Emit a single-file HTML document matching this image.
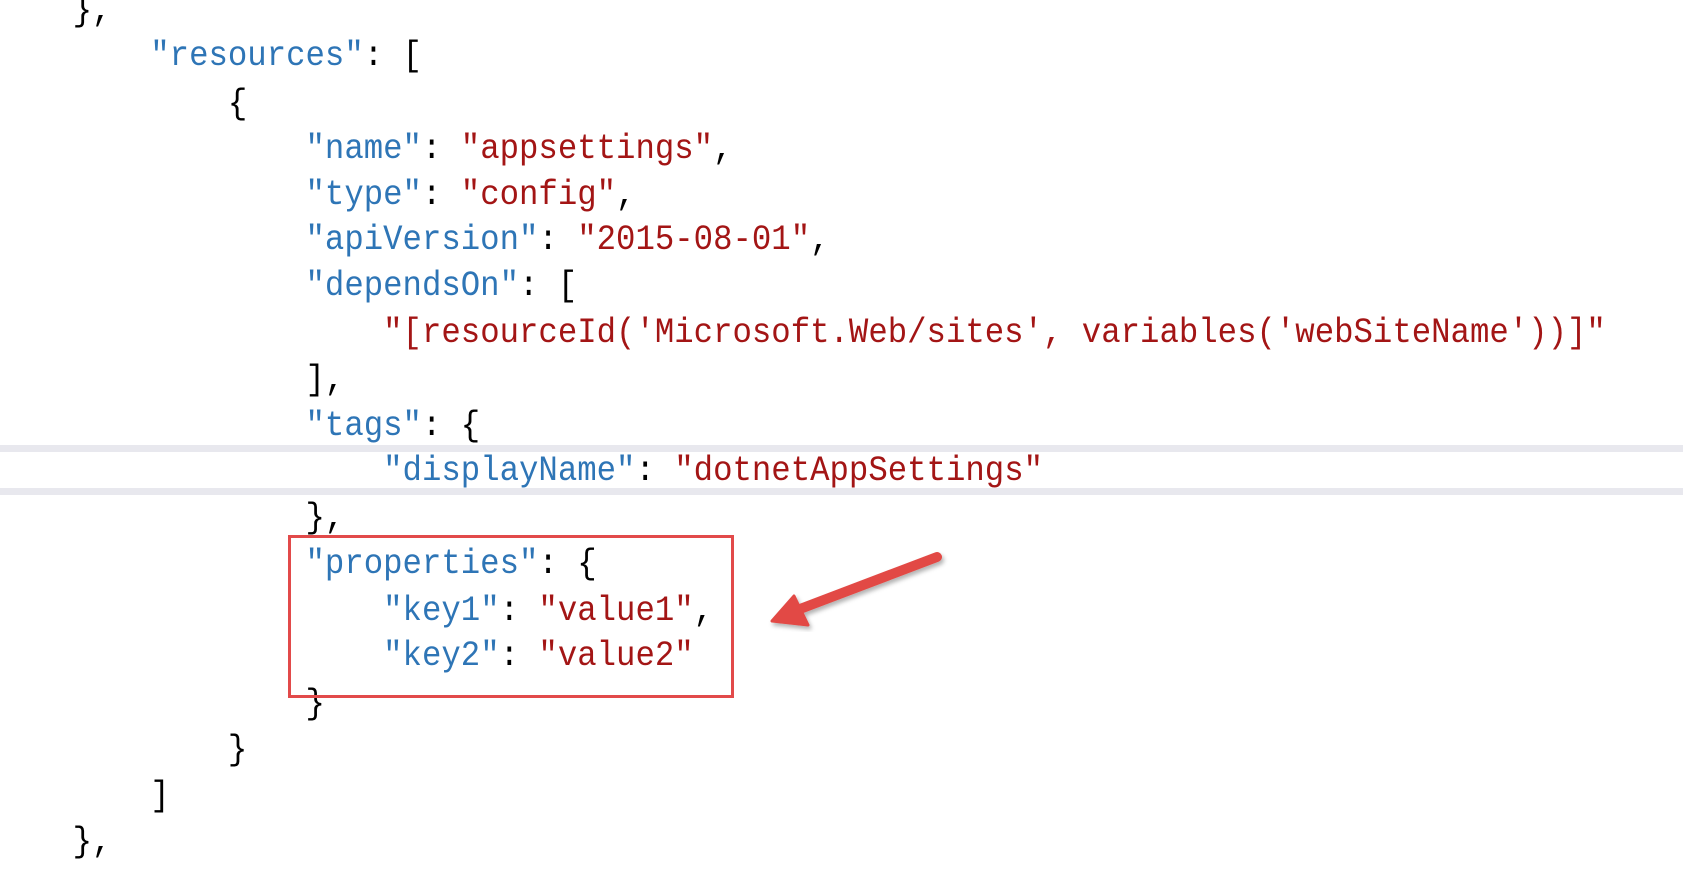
<!DOCTYPE html>
<html><head><meta charset="utf-8"><style>
html,body{margin:0;padding:0;background:#fff;width:1683px;height:871px;overflow:hidden;position:relative}
.l{position:absolute;left:-5px;height:46px;line-height:46px;font-family:"Liberation Mono",monospace;font-size:35px;white-space:pre;color:#000;transform:scaleX(0.924);transform-origin:0 50%}
.k{color:#2e75b6}.s{color:#a31515}
.hl{position:absolute;left:0;width:1683px;top:445px;height:50px;border-top:7px solid #e8e8ee;border-bottom:7px solid #e8e8ee;box-sizing:border-box}
.box{position:absolute;left:288px;top:535px;width:446px;height:163px;border:3px solid #e24a4a;box-sizing:border-box}
</style></head><body>
<div class="hl"></div>
<div class="l" style="top:-12px">    },</div>
<div class="l" style="top:33px">        <span class="k">"resources"</span>: [</div>
<div class="l" style="top:81px">            {</div>
<div class="l" style="top:126px">                <span class="k">"name"</span>: <span class="s">"appsettings"</span>,</div>
<div class="l" style="top:172px">                <span class="k">"type"</span>: <span class="s">"config"</span>,</div>
<div class="l" style="top:217px">                <span class="k">"apiVersion"</span>: <span class="s">"2015-08-01"</span>,</div>
<div class="l" style="top:263px">                <span class="k">"dependsOn"</span>: [</div>
<div class="l" style="top:310px">                    <span class="s">"[resourceId('Microsoft.Web/sites', variables('webSiteName'))]"</span></div>
<div class="l" style="top:357px">                ],</div>
<div class="l" style="top:403px">                <span class="k">"tags"</span>: {</div>
<div class="l" style="top:448px">                    <span class="k">"displayName"</span>: <span class="s">"dotnetAppSettings"</span></div>
<div class="l" style="top:495px">                },</div>
<div class="l" style="top:541px">                <span class="k">"properties"</span>: {</div>
<div class="l" style="top:588px">                    <span class="k">"key1"</span>: <span class="s">"value1"</span>,</div>
<div class="l" style="top:633px">                    <span class="k">"key2"</span>: <span class="s">"value2"</span></div>
<div class="l" style="top:681px">                }</div>
<div class="l" style="top:727px">            }</div>
<div class="l" style="top:773px">        ]</div>
<div class="l" style="top:819px">    },</div>
<div class="box"></div>
<svg style="position:absolute;left:0;top:0" width="1683" height="871">
<defs><filter id="sh"><feDropShadow dx="2" dy="3" stdDeviation="2" flood-color="#000" flood-opacity="0.3"/></filter></defs>
<g filter="url(#sh)" fill="#e24a45" stroke="#e24a45">
<line x1="937" y1="557" x2="800" y2="609" stroke-width="10" stroke-linecap="round"/>
<polygon points="772,621 794,596 808,625" stroke-width="3" stroke-linejoin="round"/>
</g>
</svg>
</body></html>
